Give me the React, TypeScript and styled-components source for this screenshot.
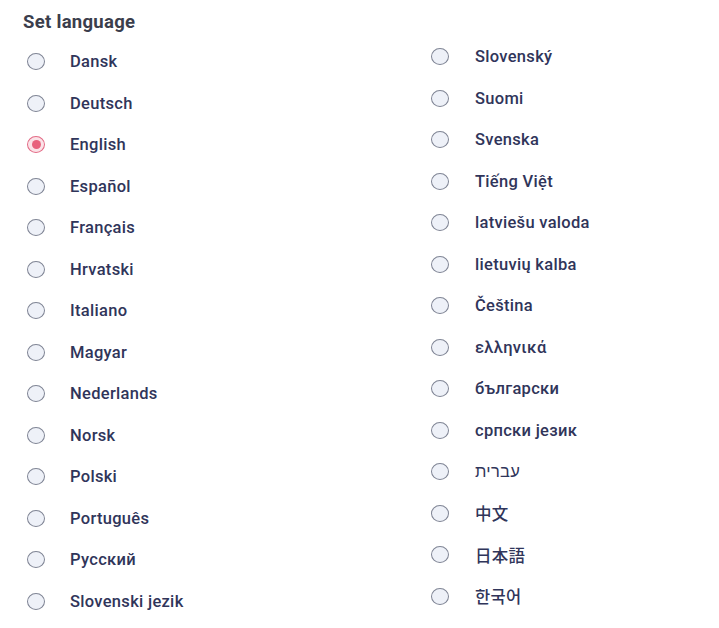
import React, { useState } from "react";
import styled, { createGlobalStyle } from "styled-components";

const Global = createGlobalStyle`
  html, body { margin: 0; padding: 0; background: #ffffff; }
  body { font-family: Roboto, "Noto Sans", "Noto Sans CJK KR", "Noto Sans CJK JP", sans-serif; }
`;

const Page = styled.div`
  width: 719px;
  height: 628px;
  box-sizing: border-box;
  padding: 9px 0 0 23px;
  background: #fff;
  overflow: hidden;
`;

const Title = styled.h1`
  margin: 0;
  font-size: 18.5px;
  line-height: 27px;
  font-weight: 700;
  letter-spacing: 0.3px;
  color: #3b3e4c;
`;

const Columns = styled.div`
  display: grid;
  grid-template-columns: 404px 1fr;
  padding-left: 4px;
`;

const Column = styled.div<{ $offset: number }>`
  display: flex;
  flex-direction: column;
  padding-top: ${(p) => p.$offset}px;
`;

const Row = styled.label<{ $gap: number }>`
  display: flex;
  align-items: center;
  height: 41.5px;
  gap: ${(p) => p.$gap}px;
  cursor: pointer;
`;

const Radio = styled.span<{ $checked: boolean }>`
  box-sizing: border-box;
  width: 18px;
  height: 17px;
  flex: none;
  border-radius: 50%;
  border: 1.7px solid ${(p) => (p.$checked ? "#e36b86" : "#7f8494")};
  background: ${(p) => (p.$checked ? "#fbe3e8" : "#eef1f8")};
  display: flex;
  align-items: center;
  justify-content: center;
  &::after {
    content: "";
    display: ${(p) => (p.$checked ? "block" : "none")};
    width: 9px;
    height: 9px;
    border-radius: 50%;
    background: #e8627d;
  }
`;

const Label = styled.span`
  font-size: 16.5px;
  font-weight: 500;
  letter-spacing: 0.3px;
  color: #30355a;
  white-space: nowrap;
`;

const left = [
  "Dansk",
  "Deutsch",
  "English",
  "Español",
  "Français",
  "Hrvatski",
  "Italiano",
  "Magyar",
  "Nederlands",
  "Norsk",
  "Polski",
  "Português",
  "Русский",
  "Slovenski jezik",
];

const right = [
  "Slovenský",
  "Suomi",
  "Svenska",
  "Tiếng Việt",
  "latviešu valoda",
  "lietuvių kalba",
  "Čeština",
  "ελληνικά",
  "български",
  "српски језик",
  "עברית",
  "中文",
  "日本語",
  "한국어",
];

export default function App() {
  const [lang, setLang] = useState("English");
  const renderRow = (name: string, gap: number) => (
    <Row key={name} $gap={gap} onClick={() => setLang(name)}>
      <Radio $checked={lang === name} />
      <Label>{name}</Label>
    </Row>
  );
  return (
    <Page>
      <Global />
      <Title>Set language</Title>
      <Columns>
        <Column $offset={5}>{left.map((n) => renderRow(n, 25))}</Column>
        <Column $offset={0}>{right.map((n) => renderRow(n, 26))}</Column>
      </Columns>
    </Page>
  );
}
